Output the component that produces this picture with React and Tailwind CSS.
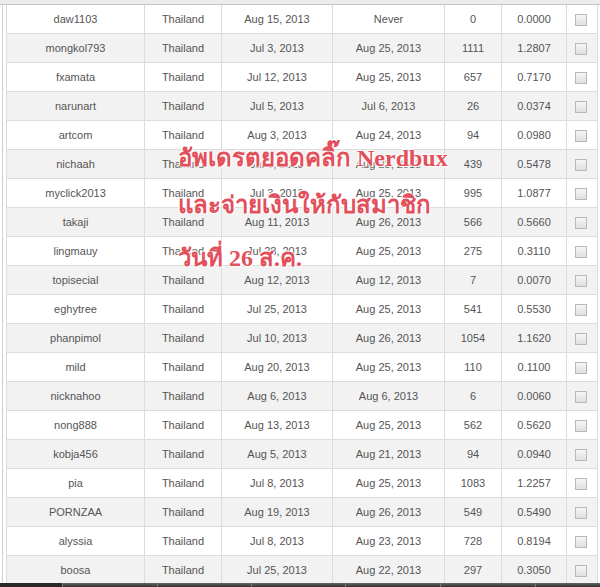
const rows = [
  ["daw1103", "Aug 15, 2013", "Never", "0", "0.0000"],
  ["mongkol793", "Jul 3, 2013", "Aug 25, 2013", "1111", "1.2807"],
  ["fxamata", "Jul 12, 2013", "Aug 25, 2013", "657", "0.7170"],
  ["narunart", "Jul 5, 2013", "Jul 6, 2013", "26", "0.0374"],
  ["artcom", "Aug 3, 2013", "Aug 24, 2013", "94", "0.0980"],
  ["nichaah", "Jul 3, 2013", "Aug 23, 2013", "439", "0.5478"],
  ["myclick2013", "Jul 3, 2013", "Aug 25, 2013", "995", "1.0877"],
  ["takaji", "Aug 11, 2013", "Aug 26, 2013", "566", "0.5660"],
  ["lingmauy", "Jul 28, 2013", "Aug 25, 2013", "275", "0.3110"],
  ["topisecial", "Aug 12, 2013", "Aug 12, 2013", "7", "0.0070"],
  ["eghytree", "Jul 25, 2013", "Aug 25, 2013", "541", "0.5530"],
  ["phanpimol", "Jul 10, 2013", "Aug 26, 2013", "1054", "1.1620"],
  ["mild", "Aug 20, 2013", "Aug 25, 2013", "110", "0.1100"],
  ["nicknahoo", "Aug 6, 2013", "Aug 6, 2013", "6", "0.0060"],
  ["nong888", "Aug 13, 2013", "Aug 25, 2013", "562", "0.5620"],
  ["kobja456", "Aug 5, 2013", "Aug 21, 2013", "94", "0.0940"],
  ["pia", "Jul 8, 2013", "Aug 25, 2013", "1083", "1.2257"],
  ["PORNZAA", "Aug 19, 2013", "Aug 26, 2013", "549", "0.5490"],
  ["alyssia", "Jul 8, 2013", "Aug 23, 2013", "728", "0.8194"],
  ["boosa", "Jul 25, 2013", "Aug 22, 2013", "297", "0.3050"],
];

const cell = "flex items-center justify-center border-r border-[#dcdcdc]";

// red caption pasted over the table
const overlayText =
  "font-bold text-[#e2505b] [text-shadow:0_0_2px_#fff,0_0_3px_#fff,1px_1px_0_#fff,-1px_-1px_0_#fff] whitespace-nowrap";

export default function App() {
  return (
    <div className="relative w-[600px] h-[587px] overflow-hidden bg-white font-['Liberation_Sans',Arial,sans-serif] text-[11px] text-[#555]">
      <div className="h-[4px] bg-[#ececec]" />
      <div className="flex border-t border-[#c4c4c4]">
        <div className="w-[2px]" />
        <div className="w-[4px] border-l border-[#d0d0d0] bg-white" />
        <div className="flex flex-col border-l border-[#dcdcdc]">
          {rows.map((r, i) => (
            <div
              key={r[0]}
              className={`grid grid-cols-[138px_77px_111px_112px_57px_65px_31px] h-[29px] border-b border-[#dcdcdc] ${
                i % 2 === 1 ? "bg-[#f2f2f2]" : "bg-white"
              }`}
            >
              <div className={cell}>{r[0]}</div>
              <div className={cell}>Thailand</div>
              <div className={cell}>{r[1]}</div>
              <div className={cell}>{r[2]}</div>
              <div className={cell}>{r[3]}</div>
              <div className={cell}>{r[4]}</div>
              <div className={cell}>
                <div className="w-[12px] h-[12px] border border-[#b8b8b8] bg-gradient-to-b from-[#f6f6f6] to-[#e0e0e0] ml-[-2px] mt-[2px]" />
              </div>
            </div>
          ))}
        </div>
      </div>
      <div className="absolute left-0 right-0 top-[583px] h-[4px] flex bg-[#222]">
        <div className="w-[62px] bg-[#2a2a2a]" />
        <div className="w-[95px] border-l border-[#777] bg-gradient-to-b from-[#666] to-[#333]" />
        <div className="w-[94px] border-l border-[#777] bg-gradient-to-b from-[#666] to-[#333]" />
        <div className="w-[94px] border-l border-[#777] bg-gradient-to-b from-[#666] to-[#333]" />
        <div className="w-[95px] border-l border-[#777] bg-gradient-to-b from-[#666] to-[#333]" />
        <div className="w-[95px] border-l border-[#777] bg-gradient-to-b from-[#666] to-[#333]" />
        <div className="flex-1 border-l border-[#777] bg-gradient-to-b from-[#666] to-[#333]" />
      </div>
      <div className="absolute left-[178px] top-[143px] flex flex-col font-['Liberation_Serif','Noto_Sans','DejaVu_Serif',serif] text-[24px] leading-[30px]">
        <div className={overlayText}>อัพเดรตยอดคลิ๊ก Nerdbux</div>
        <div className={`${overlayText} mt-[17px]`}>และจ่ายเงินให้กับสมาชิก</div>
        <div className={`${overlayText} mt-[23px]`}>วันที่ 26 ส.ค.</div>
      </div>
    </div>
  );
}
